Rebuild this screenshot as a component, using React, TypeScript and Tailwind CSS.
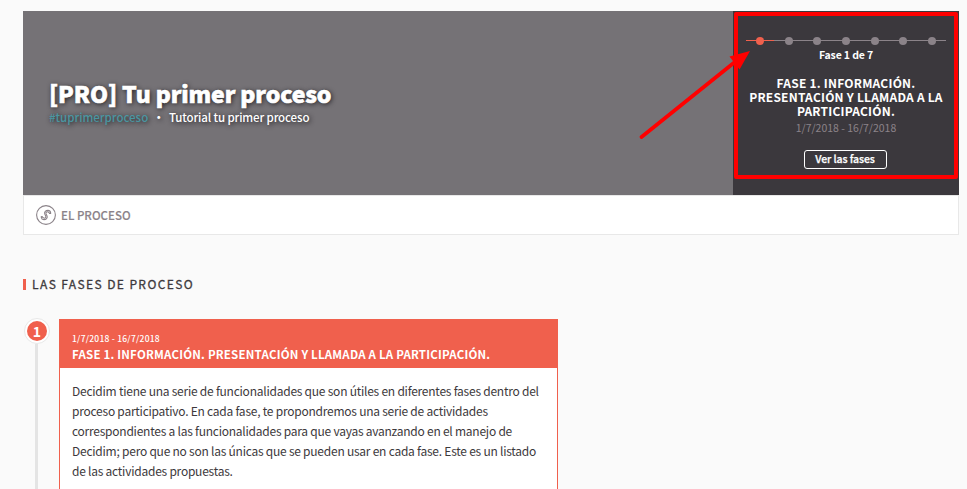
const steps = [0, 1, 2, 3, 4, 5, 6];

const body = [
  'Decidim tiene una serie de funcionalidades que son útiles en diferentes fases dentro del',
  'proceso participativo. En cada fase, te propondremos una serie de actividades',
  'correspondientes a las funcionalidades para que vayas avanzando en el manejo de',
  'Decidim; pero que no son las únicas que se pueden usar en cada fase. Este es un listado',
  'de las actividades propuestas.',
];

function ProcessIcon() {
  return (
    <svg width="20" height="20" viewBox="0 0 20 20" fill="none" stroke="#8b8389" className="shrink-0">
      <circle cx="10" cy="10" r="9.4" strokeWidth="1.1" />
      <path d="M5.3 11.2v1.300c.2 1.300 1.300 2.100 2.600 2.100 2.300 0 3.800-1.700 3.200-3.500L10 8.700c-.3-1 .3-1.900 1.400-1.900.8 0 1.300.4 1.500 1" strokeWidth="1.100" />
      <path d="M14.600 9V7.600c-.2-1.300-1.300-2.200-2.600-2.200-2.300 0-3.900 1.700-3.300 3.500l1.100 2.400c.3 1-.3 1.900-1.400 1.900-.8 0-1.300-.4-1.500-1" strokeWidth="1.100" />
      <path d="M5 12h2M12.900 8.200h2" strokeWidth="1.500" />
    </svg>
  );
}

function PhasePanel() {
  return (
    <div className="relative flex w-[226px] flex-col items-center bg-[#3b383d] text-white">
      <div className="relative mt-[25px] flex h-[9px] w-[200px] items-center justify-around">
        <div className="absolute inset-x-0 top-1 h-px bg-[#8b8389]" />
        <div className="absolute left-0 top-1 h-px w-7 bg-[#f0604d]" />
        {steps.map((s) => (
          <span key={s} className={`relative size-2 rounded-full ${s === 0 ? 'bg-[#f0604d]' : 'bg-[#8b8389]'}`} />
        ))}
      </div>
      <p className="mt-[3px] text-[10.5px] font-bold leading-[14px] tracking-[-0.15px]">Fase 1 de 7</p>
      <p className="mt-[14px] whitespace-nowrap text-center text-[12px] font-bold leading-[14px] tracking-[0.22px]">
        FASE 1. INFORMACIÓN.
        <br />
        PRESENTACIÓN Y LLAMADA A LA
        <br />
        PARTICIPACIÓN.
      </p>
      <p className="mt-[2px] text-[10.5px] leading-[16px] text-[#8b8389]">1/7/2018 - 16/7/2018</p>
      <button className="mr-[2px] mt-[14px] flex h-[19px] w-[83px] items-center justify-center rounded-[3px] border border-white pb-[2px] text-[10.5px] font-medium tracking-[-0.08px] [-webkit-text-stroke:0.25px_white]">
        Ver las fases
      </button>
      <div className="absolute left-px top-[1px] h-[167px] w-[224px] rounded-[2px] border-4 border-[#ff0000]" />
    </div>
  );
}

export default function App() {
  return (
    <div className="relative h-[489px] w-[967px] overflow-hidden bg-[#fafafa] pl-[23px] pr-2 pt-[11px] font-['Noto_Sans_CJK_SC','Noto_Sans',sans-serif] text-[#3d393c]">
      <header className="flex h-[184px] bg-[#757276] text-white">
        <div className="flex-1 pl-[26px] pt-[67px] [text-shadow:1px_1px_5px_#1a181d]">
          <h1 className="whitespace-nowrap text-[23px] font-black leading-[31px] tracking-[-0.12px] [-webkit-text-stroke:0.6px_white]">[PRO] Tu primer proceso</h1>
          <div className="flex whitespace-nowrap text-[11.5px] font-medium leading-4">
            <span className="w-[107px] text-[#4a96a1]">#tuprimerproceso</span>
            <span className="-ml-[3px] mr-[3px] w-[13px] font-bold">·</span>
            <span className="tracking-[-0.12px]">Tutorial tu primer proceso</span>
          </div>
        </div>
        <PhasePanel />
      </header>
      <nav className="flex h-10 items-center border border-[#e8e8e8] bg-white pl-3">
        <ProcessIcon />
        <span className="ml-[5px] mt-px text-[11.5px] font-medium text-[#8b8389] [-webkit-text-stroke:0.15px_#8b8389]">EL PROCESO</span>
      </nav>
      <h2 className="mt-[40px] flex h-[18px] items-center">
        <span className="mt-[1px] h-[11px] w-[3px] bg-[#f0604d]" />
        <span className="ml-[6px] text-[12px] leading-[18px] tracking-[1.4px] [-webkit-text-stroke:0.3px_#3d393c]">LAS FASES DE PROCESO</span>
      </h2>
      <section className="mt-[26px] flex items-start">
        <div className="flex w-9 flex-col items-start">
          <div className="ml-px mt-[-1px] flex size-[26px] items-center justify-center rounded-full border-[1px] border-[#e8e8e8] bg-white">
            <span className="flex size-5 items-center justify-center rounded-full bg-[#f0604d] pb-px text-[14px] font-bold leading-5 text-white">1</span>
          </div>
          <div className="ml-3 h-[160px] w-[3px] bg-[#e4e4e4]" />
        </div>
        <article className="h-[200px] w-[499px] border border-[#f0604d] bg-white">
          <div className="h-12 whitespace-nowrap bg-[#f0604d] pl-3 pt-[11px] font-bold text-white">
            <p className="text-[8.5px] font-medium leading-[14px] tracking-[0.24px]">1/7/2018 - 16/7/2018</p>
            <p className="mt-px text-[11.5px] leading-[17px] tracking-[0.21px]">FASE 1. INFORMACIÓN. PRESENTACIÓN Y LLAMADA A LA PARTICIPACIÓN.</p>
          </div>
          <div className="whitespace-nowrap pl-3 pt-[13px] text-[12px] leading-5 tracking-[-0.24px]">
            {body.map((line) => (
              <p key={line}>{line}</p>
            ))}
          </div>
        </article>
      </section>
      <svg className="pointer-events-none absolute left-0 top-0" width="967" height="200" viewBox="0 0 967 200">
        <path d="M641.500 137L738 59.500" stroke="#ff0000" strokeWidth="3.800" strokeLinecap="round" />
        <path d="M750 51L729.500 56.500L739.500 69.500Z" fill="#ff0000" />
      </svg>
    </div>
  );
}
